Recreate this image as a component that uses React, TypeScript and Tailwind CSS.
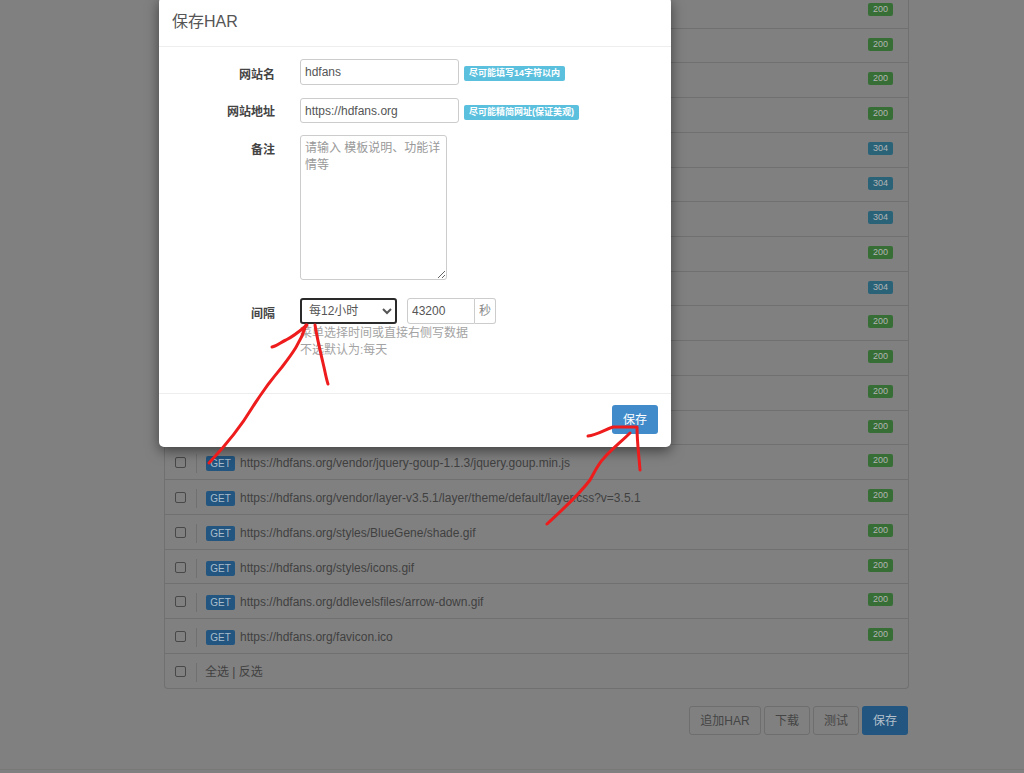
import React from 'react';

const font = '[font-family:"Liberation_Sans","Noto_Sans_CJK_SC",sans-serif]';

type Row = { url: string; status: string };

const rows: Row[] = [
  { url: '', status: '200' },
  { url: '', status: '200' },
  { url: '', status: '200' },
  { url: '', status: '200' },
  { url: '', status: '304' },
  { url: '', status: '304' },
  { url: '', status: '304' },
  { url: '', status: '200' },
  { url: '', status: '304' },
  { url: '', status: '200' },
  { url: '', status: '200' },
  { url: '', status: '200' },
  { url: '', status: '200' },
  { url: 'https://hdfans.org/vendor/jquery-goup-1.1.3/jquery.goup.min.js', status: '200' },
  { url: 'https://hdfans.org/vendor/layer-v3.5.1/layer/theme/default/layer.css?v=3.5.1', status: '200' },
  { url: 'https://hdfans.org/styles/BlueGene/shade.gif', status: '200' },
  { url: 'https://hdfans.org/styles/icons.gif', status: '200' },
  { url: 'https://hdfans.org/ddlevelsfiles/arrow-down.gif', status: '200' },
  { url: 'https://hdfans.org/favicon.ico', status: '200' },
];

const RowCheck = () => (
  <>
    <input
      type="checkbox"
      className="appearance-none ml-[10px] mt-[12px] w-[11px] h-[11px] border border-[#484848] rounded-[2px] bg-[#808080] shrink-0"
    />
    <span className="ml-[10px] mt-[9px] w-px h-[19px] bg-[#707070] shrink-0" />
  </>
);

const RequestRow = ({ url, status }: Row) => (
  <div className="flex items-start h-[34.72px] border-b border-[#707070]">
    <RowCheck />
    {url && (
      <>
        <span className="ml-[9px] mt-[11px] w-[29px] h-[15px] rounded-[2px] bg-[#22557f] text-[#a9bccc] text-[10px] font-medium leading-[15px] text-center shrink-0">
          GET
        </span>
        <span className="ml-[5px] mt-[10px] text-xs leading-[17px] text-[#404040] whitespace-nowrap">{url}</span>
      </>
    )}
    <span
      className={`ml-auto mr-[15px] mt-[9px] w-[25px] h-[13px] rounded-[2px] text-[#b4b4b4] text-[9px] leading-[12px] text-center shrink-0 ${
        status === '200' ? 'bg-[#366e36]' : 'bg-[#2a6378]'
      }`}
    >
      {status}
    </span>
  </div>
);

const FormLabel = ({ children, className = '' }: { children: React.ReactNode; className?: string }) => (
  <label className={`w-[116px] mr-[25px] text-right text-xs font-bold text-[#444] shrink-0 ${className}`}>{children}</label>
);

const Hint = ({ children }: { children: React.ReactNode }) => (
  <span className="ml-[5px] mt-[7px] h-[15px] px-[5px] rounded-[2px] bg-[#5bc0de] text-white text-[9px] font-bold leading-[15px] whitespace-nowrap">
    {children}
  </span>
);

const SaveHarModal = () => (
  <div className="absolute left-[159px] top-[-3px] w-[512px] h-[450px] flex flex-col bg-white rounded-[5px] shadow-[0_4px_13px_rgba(0,0,0,0.5)]">
    <div className="h-[50px] shrink-0 border-b border-[#eeeeee] pl-[13px] pt-[14px] text-base leading-[22px] text-[#555]">
      保存HAR
    </div>
    <div className="flex-1 pt-[12px] flex flex-col">
      <div className="flex items-start">
        <FormLabel className="pt-[8px]">网站名</FormLabel>
        <input
          readOnly
          value="hdfans"
          className="w-[159px] h-[26px] px-[4px] border border-[#cccccc] rounded-[3px] text-xs text-[#555] outline-none"
        />
        <Hint>尽可能填写14字符以内</Hint>
      </div>
      <div className="flex items-start mt-[13px]">
        <FormLabel className="pt-[6px]">网站地址</FormLabel>
        <input
          readOnly
          value="https://hdfans.org"
          className="w-[159px] h-[25px] px-[4px] border border-[#cccccc] rounded-[3px] text-xs text-[#555] outline-none"
        />
        <Hint>尽可能精简网址(保证美观)</Hint>
      </div>
      <div className="flex items-start mt-[12px]">
        <FormLabel className="pt-[7px]">备注</FormLabel>
        <textarea
          placeholder="请输入 模板说明、功能详情等"
          className="w-[147px] h-[145px] px-[4px] py-[4px] border border-[#cccccc] rounded-[3px] text-xs leading-[17px] text-[#555] placeholder:text-[#999] outline-none"
        />
      </div>
      <div className="flex items-start mt-[18px]">
        <FormLabel className="pt-[8px]">间隔</FormLabel>
        <div className="flex flex-col">
          <div className="flex items-start">
            <select className="w-[97px] h-[26px] pl-[3px] border-2 border-[#2a2a2a] rounded-[3px] bg-white text-xs text-[#555] outline-none">
              <option>每12小时</option>
            </select>
            <input
              readOnly
              value="43200"
              className="ml-[10px] w-[68px] h-[26px] px-[4px] border border-[#cccccc] rounded-l-[3px] text-xs text-[#555] outline-none"
            />
            <span className="w-[21px] h-[26px] border border-l-0 border-[#cccccc] rounded-r-[3px] text-xs leading-[24px] text-center text-[#888]">
              秒
            </span>
          </div>
          <p className="mt-[1px] text-xs leading-[17px] text-[#a3a3a3]">
            菜单选择时间或直接右侧写数据
            <br />
            不选默认为:每天
          </p>
        </div>
      </div>
    </div>
    <div className="h-[54px] shrink-0 border-t border-[#eeeeee] flex justify-end pt-[11px] pr-[13px]">
      <button className="w-[46px] h-[29px] rounded-[3px] bg-[#428bca] text-white text-xs">保存</button>
    </div>
  </div>
);

// hand drawn red arrows on top of the screenshot
const Arrows = () => (
  <svg className="absolute inset-0 pointer-events-none" width="1024" height="773" viewBox="0 0 1024 773" fill="none">
    <g stroke="#ee1c1c" strokeWidth="3" strokeLinecap="round" strokeLinejoin="round">
      <path d="M209 463 C225 446 240 428 252 408 C262 392 270 381 282 367 C292 354 301 342 306 325" />
      <path d="M272 347 C277 346 281 342 286 340 C294 336 300 331 307 325" />
      <path d="M315 325 C317 338 320 350 323 363 C325 371 326 378 328 384" />
      <path d="M547 524 C562 510 578 496 590 480 C594 473 598 464 604 458 C612 449 622 441 630 433" />
      <path d="M588 436 C597 435 604 430 613 427 L637 427 C637 442 639 456 640 470" />
    </g>
  </svg>
);

const App: React.FC = () => {
  return (
    <div className={`relative w-[1024px] h-[773px] overflow-hidden bg-[#808080] ${font}`}>
      <div className="ml-[164px] w-[745px] -mt-[6px]">
        <div className="border-x border-b border-[#707070] rounded-b-[4px]">
          {rows.map((row, i) => (
            <RequestRow key={i} url={row.url} status={row.status} />
          ))}
          <div className="flex items-start h-[34.72px]">
            <RowCheck />
            <span className="ml-[8px] mt-[10px] text-xs leading-[17px] text-[#404040]">全选 | 反选</span>
          </div>
        </div>
        <div className="mt-[17px] pr-px flex justify-end gap-[3px] text-xs">
          <button className="w-[72px] h-[29px] border border-[#6e6e6e] rounded-[3px] text-[#454545]">追加HAR</button>
          <button className="w-[46px] h-[29px] border border-[#6e6e6e] rounded-[3px] text-[#454545]">下载</button>
          <button className="w-[46px] h-[29px] border border-[#6e6e6e] rounded-[3px] text-[#454545]">测试</button>
          <button className="w-[46px] h-[29px] rounded-[3px] bg-[#22557f] text-[#b4c0cc]">保存</button>
        </div>
      </div>
      <div className="absolute left-0 right-0 top-[769px] border-t border-[#787878]" />
      <SaveHarModal />
      <Arrows />
    </div>
  );
};

export default App;
